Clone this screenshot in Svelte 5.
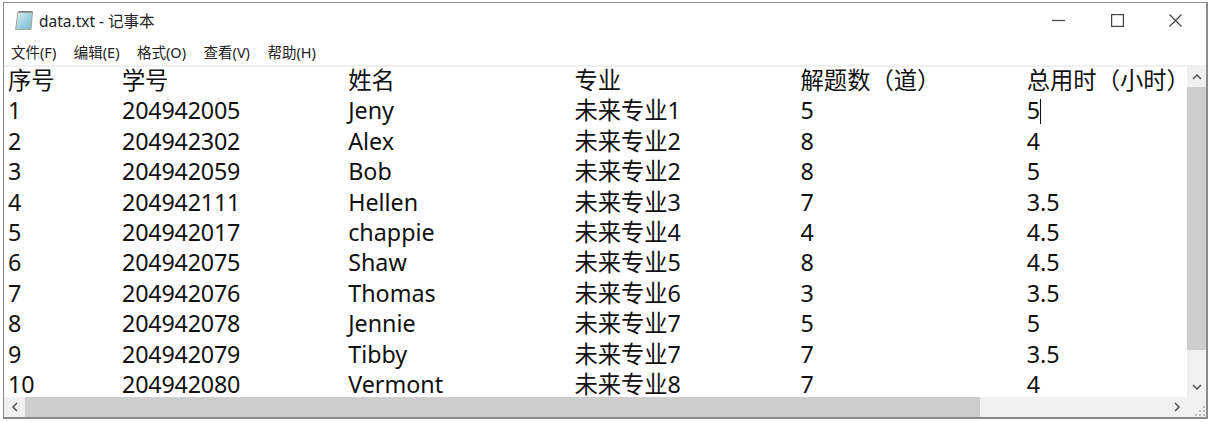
<script>
  const header = ['序号', '学号', '姓名', '专业', '解题数（道）', '总用时（小时）'];
  const rows = [
    ['1', '204942005', 'Jeny', '未来专业1', '5', '5'],
    ['2', '204942302', 'Alex', '未来专业2', '8', '4'],
    ['3', '204942059', 'Bob', '未来专业2', '8', '5'],
    ['4', '204942111', 'Hellen', '未来专业3', '7', '3.5'],
    ['5', '204942017', 'chappie', '未来专业4', '4', '4.5'],
    ['6', '204942075', 'Shaw', '未来专业5', '8', '4.5'],
    ['7', '204942076', 'Thomas', '未来专业6', '3', '3.5'],
    ['8', '204942078', 'Jennie', '未来专业7', '5', '5'],
    ['9', '204942079', 'Tibby', '未来专业7', '7', '3.5'],
    ['10', '204942080', 'Vermont', '未来专业8', '7', '4']
  ];
  const menus = ['文件(F)', '编辑(E)', '格式(O)', '查看(V)', '帮助(H)'];
</script>

<div class="window">
  <header class="titlebar">
    <svg class="appicon" width="20" height="21" viewBox="0 0 20 21">
      <defs>
        <linearGradient id="pad" x1="0" y1="0" x2="1" y2="1">
          <stop offset="0" stop-color="#dceff4" />
          <stop offset="1" stop-color="#6fb6ce" />
        </linearGradient>
      </defs>
      <path d="M4 2h14.500L17 19.500H1.500z" fill="url(#pad)" stroke="#a9a695" stroke-width="1" />
      <path d="M4.500 1.800h14" stroke="#7c8284" stroke-width="1.600" />
    </svg>
    <span class="title">data.txt - 记事本</span>
    <div class="controls">
      <svg width="13" height="13" viewBox="0 0 13 13"><path d="M0 6.500h13" stroke="#444" stroke-width="1.200" /></svg>
      <svg width="13" height="13" viewBox="0 0 13 13"><rect x="0.600" y="0.600" width="11.800" height="11.800" fill="none" stroke="#444" stroke-width="1.200" /></svg>
      <svg width="13" height="13" viewBox="0 0 13 13"><path d="M0.500 0.500l12 12M12.500 0.500l-12 12" stroke="#444" stroke-width="1.200" /></svg>
    </div>
  </header>

  <nav class="menubar">
    {#each menus as m}<span>{m}</span>{/each}
  </nav>

  <div class="body">
    <div class="editor">
      <div class="line">
        {#each header as h}<span>{h}</span>{/each}
      </div>
      {#each rows as row, i}
        <div class="line">
          {#each row as cell, j}
            <span>{cell}{#if i === 0 && j === 5}<i class="caret"></i>{/if}</span>
          {/each}
        </div>
      {/each}
    </div>

    <div class="vscroll">
      <button aria-label="up"><svg width="12" height="12" viewBox="0 0 12 12"><path d="M2 8l4-4 4 4" fill="none" stroke="#505050" stroke-width="1.500" /></svg></button>
      <div class="vtrack"><div class="vthumb"></div></div>
      <button aria-label="down"><svg width="12" height="12" viewBox="0 0 12 12"><path d="M2 4l4 4 4-4" fill="none" stroke="#505050" stroke-width="1.500" /></svg></button>
    </div>

    <div class="hscroll">
      <button aria-label="left"><svg width="12" height="12" viewBox="0 0 12 12"><path d="M8 2L4 6l4 4" fill="none" stroke="#505050" stroke-width="1.500" /></svg></button>
      <div class="htrack"><div class="hthumb"></div></div>
      <button aria-label="right"><svg width="12" height="12" viewBox="0 0 12 12"><path d="M4 2l4 4-4 4" fill="none" stroke="#505050" stroke-width="1.500" /></svg></button>
    </div>

    <div class="grip">
      <svg width="12" height="12" viewBox="0 0 12 12" fill="#bdbdbd">
        <rect x="9" y="1" width="2" height="2" /><rect x="5" y="5" width="2" height="2" /><rect x="9" y="5" width="2" height="2" />
        <rect x="1" y="9" width="2" height="2" /><rect x="5" y="9" width="2" height="2" /><rect x="9" y="9" width="2" height="2" />
      </svg>
    </div>
  </div>
</div>

<style>
  :global(body) {
    margin: 0;
    background: #fff;
  }

  .window {
    box-sizing: border-box;
    width: 1205px;
    height: 417px;
    margin: 2px 0 0 3px;
    border: 1px solid #8a8a8a;
    border-width: 1px 2px 2px 1px;
    display: flex;
    flex-direction: column;
    font-family: "Noto Sans", "Noto Sans CJK SC", sans-serif;
    background: #fff;
    overflow: hidden;
  }

  .titlebar {
    height: 35px;
    display: flex;
    align-items: center;
    padding-left: 10px;
    flex: none;
  }

  .appicon {
    margin-right: 5px;
  }

  .title {
    font-size: 15.500px;
    color: #222;
  }

  .controls {
    margin-left: auto;
    display: flex;
    gap: 45.500px;
    padding-right: 24px;
  }

  .menubar {
    height: 27px;
    display: flex;
    align-items: center;
    gap: 17.500px;
    padding-left: 7px;
    font-size: 14.500px;
    color: #222;
    flex: none;
    border-bottom: 2px solid #f0f0f0;
  }

  .body {
    flex: 1;
    min-height: 0;
    display: grid;
    grid-template-columns: minmax(0, 1fr) 19px;
    grid-template-rows: minmax(0, 1fr) 20px;
  }

  .editor {
    min-height: 0;
    padding-left: 4px;
    font-size: 23.300px;
    color: #111;
  }

  .line {
    display: grid;
    grid-template-columns: 114px repeat(4, 226.200px) 1fr;
    height: 30.400px;
    line-height: 27.400px;
    white-space: nowrap;
  }

  /* student ids run a little narrower than the other latin text */
  .line span:nth-child(2) {
    letter-spacing: -0.200px;
  }

  .caret {
    display: inline-block;
    width: 1px;
    height: 25px;
    background: #111;
    vertical-align: -5px;
  }

  button {
    all: unset;
    flex: none;
    display: flex;
    align-items: center;
    justify-content: center;
    width: 21px;
    height: 20px;
  }

  .vscroll {
    display: flex;
    flex-direction: column;
    align-items: center;
    background: #f0f0f0;
  }

  .vtrack {
    flex: 1;
    width: 100%;
  }

  .vthumb {
    height: 90.700%;
    background: #cdcdcd;
  }

  .hscroll {
    display: flex;
    align-items: center;
    background: #f0f0f0;
  }

  .htrack {
    flex: 1;
    height: 100%;
  }

  .hthumb {
    height: 100%;
    width: 83.700%;
    background: #cdcdcd;
  }

  .grip {
    background: #f0f0f0;
    display: flex;
    align-items: flex-end;
    justify-content: flex-end;
  }
</style>
